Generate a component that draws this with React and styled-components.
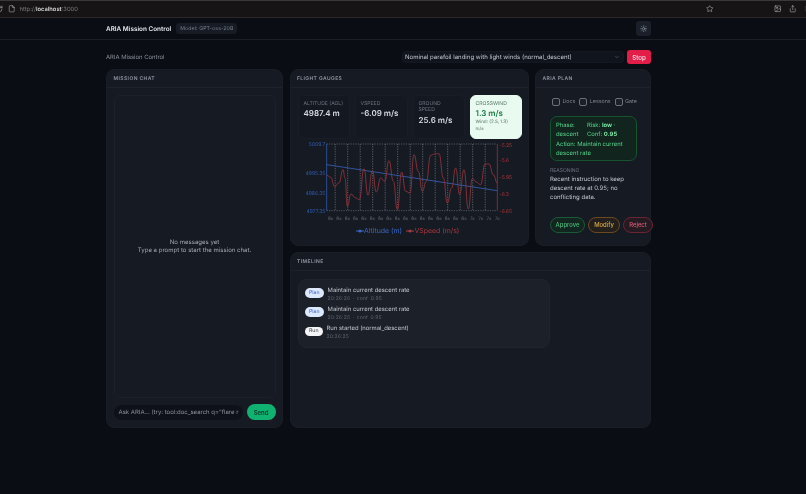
import React from "react";
import styled, { createGlobalStyle } from "styled-components";
import { File, RotateCw, Star, Share, Image, Sun, ChevronDown } from "lucide-react";

const Global = createGlobalStyle`
  html, body { margin: 0; padding: 0; background: #0a0d14; }
  * { box-sizing: border-box; }
  body { font-family: Inter, "Liberation Sans", sans-serif; width: 806px; height: 494px; overflow: hidden; text-rendering: geometricPrecision; }
  #root { will-change: transform; }
`;

const Chrome = styled.div`
  height: 18px; display: flex; align-items: center; background: #161415;
  border-top: 1px solid #3a3839; border-bottom: 1px solid #2a2829;
  color: #c9c9c9;
`;
const ChromeLeft = styled.div`
  display: flex; align-items: center; gap: 5px; margin-left: -5px;
`;
const Url = styled.span`
  font-size: 5.8px; color: #7d7d7d; margin-left: -1px;
  b { color: #d5d5d5; font-weight: 600; }
`;
const ChromeRight = styled.div`
  margin-left: auto; display: flex; align-items: center; margin-right: -6px;
`;
const StarWrap = styled.span`display: flex; margin-right: 60px;`;
const ExtWrap = styled.span`display: flex; margin-right: 8px;`;

const Header = styled.header`
  height: 22px; border-bottom: 1px solid #1b1f28; display: flex; align-items: center;
  padding: 0 155px 0 106px;
`;
const Title = styled.h1`
  margin: 0; font-size: 6.4px; font-weight: 600; color: #e5e7eb; white-space: nowrap;
`;
const Model = styled.span`
  margin-left: 5px; padding: 2.5px 4px; font-size: 5.2px; color: #7b828f; background: #161b24;
  border-radius: 3px; letter-spacing: .1px;
`;
const ThemeBtn = styled.button`
  margin-left: auto; width: 15px; height: 15px; display: flex; align-items: center; justify-content: center;
  padding: 0; background: #1a1f29; border: 0; border-radius: 3px; color: #9ca3af;
`;

const Main = styled.main`
  width: 545px; margin-left: 106px; padding-top: 9px;
`;
const TopRow = styled.div`
  display: flex; align-items: center; height: 16px;
`;
const Sub = styled.span`font-size: 5.9px; color: #8b919c; white-space: nowrap;`;
const Select = styled.div`
  margin-left: auto; width: 222px; height: 12px; padding: 0 3px 0 2px; display: flex; align-items: center; justify-content: space-between;
  font-size: 6.05px; color: #c3c7cf; background: #10141c; border: 1px solid #141821; border-radius: 3px;
`;
const StopBtn = styled.button`
  margin-left: 3px; width: 24px; height: 14.5px; padding: 0; background: #e11d48; color: #fde4ea; border: 0; border-radius: 3px;
  font: 500 6.2px Inter, sans-serif;
`;

const Grid = styled.div`
  margin-top: 4px; display: grid; grid-template-columns: 177px 239px 116px; column-gap: 6.5px; row-gap: 6px;
  grid-template-rows: 177px 176px;
`;
const Panel = styled.section`
  background: #161a23; border-radius: 8px; border: 1px solid #191d26; overflow: ${p => p.$visible ? "visible" : "hidden"};
  display: flex; flex-direction: column; min-width: 0;
  ${p => p.$tall && "grid-row: span 2;"}
  ${p => p.$wide && "grid-column: span 2;"}
`;
const PanelHead = styled.div`
  height: 18px; flex: none; padding: 1px 6.5px 0; display: flex; align-items: center; border-bottom: 1px solid #1e222c;
  font-size: 5px; font-weight: 600; letter-spacing: .4px; color: #8f95a0;
`;

const ChatBody = styled.div`
  flex: 1; padding: 7px 6.5px 7px; display: flex; flex-direction: column; gap: 6px;
`;
const Messages = styled.div`
  flex: 1; border: 1px solid #1c2029; border-radius: 6px; display: flex; flex-direction: column; align-items: center; justify-content: center;
  font-size: 6.05px; line-height: 8.5px; color: #a2a7b0; text-align: center; padding-top: 1px;
`;
const Composer = styled.form`display: flex; align-items: center; gap: 4px; margin: 0;`;
const InputBox = styled.div`
  width: 130px; height: 15px; padding: 0 5px; background: #0e1119; border-radius: 8px; font-size: 6px; color: #8d929c;
  display: flex; align-items: center; white-space: nowrap; overflow: hidden;
`;
const Send = styled.button`
  width: 29px; height: 16px; padding: 0; border: 0; border-radius: 8px; background: #10b272; color: #0a3a28;
  font: 600 6px Inter, sans-serif;
`;

const GaugeBody = styled.div`flex: 1; padding: 7px 7px 0; display: flex; flex-direction: column;`;
const Tiles = styled.div`
  display: grid; grid-template-columns: 52px 53px 52px 52px; column-gap: 5px; height: 41px;
`;
const Tile = styled.div`
  border-radius: 6px; padding: 4.5px 5px; border: 1px solid ${p => p.$good ? "#e9fbf0" : "#191d26"};
  background: ${p => p.$good ? "#e9fbf0" : "#141821"};
  min-width: 0;
`;
const TileLabel = styled.div`
  font-size: 5.1px; line-height: 6.8px; white-space: nowrap; color: ${p => p.$good ? "#5b7a68" : "#6d7380"};
`;
const TileValue = styled.div`
  font-size: 8px; line-height: 10px; margin-top: .5px; font-weight: 600; color: ${p => p.$good ? "#1e7a45" : "#d7dae0"};
`;
const TileNote = styled.div`
  font-size: 4.6px; line-height: 7.2px; color: #55705f; margin-top: 1px;
`;
const ChartSvg = styled.svg`display: block; margin-top: 5px; flex: none;`;
const Legend = styled.div`
  display: flex; justify-content: center; gap: 4px; font-size: 6.9px; margin-top: -1px; padding-right: 3px;
`;
const LegendItem = styled.span`
  display: flex; align-items: center; gap: .5px; color: ${p => p.$c};
`;

const PlanBody = styled.div`flex: 1; padding: 9px 0 0 14px; display: flex; flex-direction: column; min-width: 0;`;
const Checks = styled.div`display: flex; gap: 4px; padding-left: 2px; height: 9px; align-items: center;`;
const Check = styled.label`
  display: flex; align-items: center; gap: 2.5px; font-size: 5.3px; color: #80858f;
  i { width: 8px; height: 8px; border: 1px solid #6b7079; border-radius: 2px; background: #1b1f28; display: block; }
`;
const PlanBox = styled.div`
  margin-top: 9.5px; width: 87px; height: 45px; padding: 4.5px 5px; border: 1px solid #17532f; background: #11241e; border-radius: 7px;
  color: #59d48c; font-size: 5.9px; line-height: 9px;
  b { font-weight: 700; color: #7fe8a8; }
`;
const PlanRow = styled.div`display: grid; grid-template-columns: 31px 1fr; margin-bottom: 1px;`;
const ReasonLabel = styled.div`font-size: 5px; color: #6d7380; line-height: 8px; margin-top: 6px;`;
const Reason = styled.div`font-size: 6px; line-height: 9px; color: #c3c7cf; width: 90px;`;
const Actions = styled.div`display: flex; gap: 3px; margin-top: 15px; width: 104px;`;
const Action = styled.button`
  height: 16px; width: ${p => p.$w}px; flex: none; padding: 0; border-radius: 8px; font: 500 5.9px Inter, sans-serif;
  color: ${p => p.$c}; border: 1px solid ${p => p.$b}; background: ${p => p.$bg};
`;

const TimelineBody = styled.div`flex: 1; padding: 8px 7px;`;
const TimelineBox = styled.div`
  width: 252px; height: 69px; padding: 6.5px 6px; border-radius: 8px; background: #1c2029; border: 1px solid #20242e;
  display: flex; flex-direction: column; gap: 3.3px;
`;
const TLRow = styled.div`display: flex; align-items: flex-start; gap: 3.5px;`;
const Pill = styled.span`
  flex: none; margin-top: 1.5px; padding: 0 4.5px; height: 9.5px; display: flex; align-items: center; border-radius: 5px; font-size: 5.2px;
  background: ${p => p.$run ? "#f3f4f6" : "#dbe8fe"}; color: ${p => p.$run ? "#3f4652" : "#3a63c8"};
`;
const TLText = styled.div`font-size: 5.9px; line-height: 8px; color: #c5c8ce;`;
const TLMeta = styled.div`font-size: 5px; line-height: 8px; color: #5d636e; letter-spacing: .15px; word-spacing: 1px;`;

const W = 224, H = 86;
const zx = v => (v / 3 + 295 - 297);
const zy = v => (v / 3 + 138 - 141);
const red = [[92,112],[104,118],[116,145],[129,135],[141,95],[147,120],[154,205],[165,168],[179,180],[190,185],[204,92],[216,172],[229,98],[241,162],[254,120],[266,130],[279,68],[292,130],[304,215],[317,102],[329,160],[342,165],[354,50],[367,100],[379,160],[391,130],[404,52],[416,48],[429,47],[442,120],[454,195],[467,150],[479,90],[491,170],[504,95],[517,213],[529,122],[541,132],[554,140],[567,78],[579,78],[592,110],[604,135]];
const smooth = pts => {
  let d = `M${zx(pts[0][0])} ${zy(pts[0][1])}`;
  for (let i = 0; i < pts.length - 1; i++) {
    const [a, b] = pts[i], [c, e] = pts[i + 1];
    const mx = (a + c) / 2;
    d += ` C${zx(mx)} ${zy(b)} ${zx(mx)} ${zy(e)} ${zx(c)} ${zy(e)}`;
  }
  return d;
};
const labels = Array.from({ length: 21 }, (_, i) => ({ x: 104 + 25 * i, t: i > 16 ? "7s" : "6s" }));
const gridX = Array.from({ length: 13 }, (_, i) => 117.6 + 37.5 * i);
const leftTicks = [["5009.7", 18], ["4995.35", 107], ["4986.35", 165], ["4977.35", 220]];
const rightTicks = [["-5.25", 22], ["-5.6", 68], ["-5.95", 119], ["-6.3", 170], ["-6.65", 221]];

function Chart() {
  return (
    <ChartSvg width={W} height={H} viewBox={`0 0 ${W} ${H}`}>
      {gridX.map(x => (
        <line key={x} x1={zx(x)} x2={zx(x)} y1={zy(18)} y2={zy(218)} stroke="#8b8f96" strokeWidth=".6" strokeDasharray="1.2 1.2" />
      ))}
      {[18, 218].map(y => (
        <line key={y} x1={zx(92)} x2={zx(604)} y1={zy(y)} y2={zy(y)} stroke="#7d818a" strokeWidth=".6" strokeDasharray="1.2 1.2" />
      ))}
      <line x1={zx(92)} x2={zx(92)} y1={zy(18)} y2={zy(218)} stroke="#345bab" strokeWidth=".8" />
      <line x1={zx(604)} x2={zx(604)} y1={zy(18)} y2={zy(218)} stroke="#8f343b" strokeWidth=".8" />
      {leftTicks.map(([t, y]) => (
        <text key={t} x={zx(88)} y={zy(y) + 1.7} fontSize="5" textAnchor="end" fill="#2f5cb4" fontFamily="Inter, sans-serif">{t}</text>
      ))}
      {rightTicks.map(([t, y]) => (
        <text key={t} x={zx(610)} y={zy(y) + 1.7} fontSize="5" fill="#a8343c" fontFamily="Inter, sans-serif">{t}</text>
      ))}
      {labels.map(l => (
        <text key={l.x} x={zx(l.x)} y={zy(240) + 1.6} fontSize="4.6" textAnchor="middle" fill="#5f6570" fontFamily="Inter, sans-serif">{l.t}</text>
      ))}
      <line x1={zx(92)} y1={zy(80)} x2={zx(604)} y2={zy(158)} stroke="#345bab" strokeWidth=".9" />
      <path d={smooth(red)} fill="none" stroke="#8f343b" strokeWidth=".9" />
    </ChartSvg>
  );
}

const Mark = ({ c }) => (
  <svg width="8" height="6" viewBox="0 0 8 6"><line x1="0" x2="8" y1="3" y2="3" stroke={c} strokeWidth="1" /><circle cx="4" cy="3" r="1.6" fill={c} /></svg>
);

export default function App() {
  return (
    <>
      <Global />
      <Chrome>
        <ChromeLeft>
          <RotateCw size={8} strokeWidth={1.5} />
          <File size={7.5} strokeWidth={1.6} />
          <Url>http://<b>localhost</b>:3000</Url>
        </ChromeLeft>
        <ChromeRight>
          <StarWrap><Star size={7.5} strokeWidth={1.6} /></StarWrap>
          <ExtWrap><Image size={7.5} strokeWidth={1.6} /></ExtWrap>
          <ExtWrap><Share size={7.5} strokeWidth={1.6} /></ExtWrap>
          <File size={7.5} strokeWidth={1.6} />
        </ChromeRight>
      </Chrome>
      <Header>
        <Title>ARIA Mission Control</Title>
        <Model>Model: GPT-oss-20B</Model>
        <ThemeBtn aria-label="theme"><Sun size={7.5} strokeWidth={2} /></ThemeBtn>
      </Header>
      <Main>
        <TopRow>
          <Sub>ARIA Mission Control</Sub>
          <Select>
            <span>Nominal parafoil landing with light winds (normal_descent)</span>
            <ChevronDown size={6} color="#6b7079" />
          </Select>
          <StopBtn>Stop</StopBtn>
        </TopRow>
        <Grid>
          <Panel $tall>
            <PanelHead>MISSION CHAT</PanelHead>
            <ChatBody>
              <Messages>
                <div>No messages yet</div>
                <div>Type a prompt to start the mission chat.</div>
              </Messages>
              <Composer>
                <InputBox>Ask ARIA... (try: tool:doc_search q="flare r</InputBox>
                <Send type="button">Send</Send>
              </Composer>
            </ChatBody>
          </Panel>
          <Panel>
            <PanelHead>FLIGHT GAUGES</PanelHead>
            <GaugeBody>
              <Tiles>
                <Tile><TileLabel>ALTITUDE (AGL)</TileLabel><TileValue>4987.4 m</TileValue></Tile>
                <Tile><TileLabel>VSPEED</TileLabel><TileValue>-6.09 m/s</TileValue></Tile>
                <Tile><TileLabel>GROUND<br />SPEED</TileLabel><TileValue>25.6 m/s</TileValue></Tile>
                <Tile $good>
                  <TileLabel $good>CROSSWIND</TileLabel>
                  <TileValue $good>1.3 m/s</TileValue>
                  <TileNote>Wind: (2.5, 1.3) m/s</TileNote>
                </Tile>
              </Tiles>
              <Chart />
              <Legend>
                <LegendItem $c="#3b68c4"><Mark c="#3b68c4" />Altitude (m)</LegendItem>
                <LegendItem $c="#a8383f"><Mark c="#a8383f" />VSpeed (m/s)</LegendItem>
              </Legend>
            </GaugeBody>
          </Panel>
          <Panel $visible>
            <PanelHead>ARIA PLAN</PanelHead>
            <PlanBody>
              <Checks>
                <Check><i />Docs</Check>
                <Check><i />Lessons</Check>
                <Check><i />Gate</Check>
              </Checks>
              <PlanBox>
                <PlanRow>
                  <span>Phase: descent</span>
                  <span>Risk: <b>low</b> · Conf: <b>0.95</b></span>
                </PlanRow>
                <div>Action: Maintain current descent rate</div>
              </PlanBox>
              <ReasonLabel>REASONING</ReasonLabel>
              <Reason>Recent instruction to keep descent rate at 0.95; no conflicting data.</Reason>
              <Actions>
                <Action $w={35} $c="#4fb87a" $b="#1a5a38" $bg="#12251f">Approve</Action>
                <Action $w={32} $c="#d4a945" $b="#6b4a20" $bg="#241f1c">Modify</Action>
                <Action $w={30} $c="#d85c75" $b="#6b2433" $bg="#261a22">Reject</Action>
              </Actions>
            </PlanBody>
          </Panel>
          <Panel $wide>
            <PanelHead>TIMELINE</PanelHead>
            <TimelineBody>
              <TimelineBox>
                <TLRow><Pill>Plan</Pill><div><TLText>Maintain current descent rate</TLText><TLMeta>20:26:26 · conf 0.95</TLMeta></div></TLRow>
                <TLRow><Pill>Plan</Pill><div><TLText>Maintain current descent rate</TLText><TLMeta>20:26:25 · conf 0.95</TLMeta></div></TLRow>
                <TLRow><Pill $run>Run</Pill><div><TLText>Run started (normal_descent)</TLText><TLMeta>20:26:25</TLMeta></div></TLRow>
              </TimelineBox>
            </TimelineBody>
          </Panel>
        </Grid>
      </Main>
    </>
  );
}
